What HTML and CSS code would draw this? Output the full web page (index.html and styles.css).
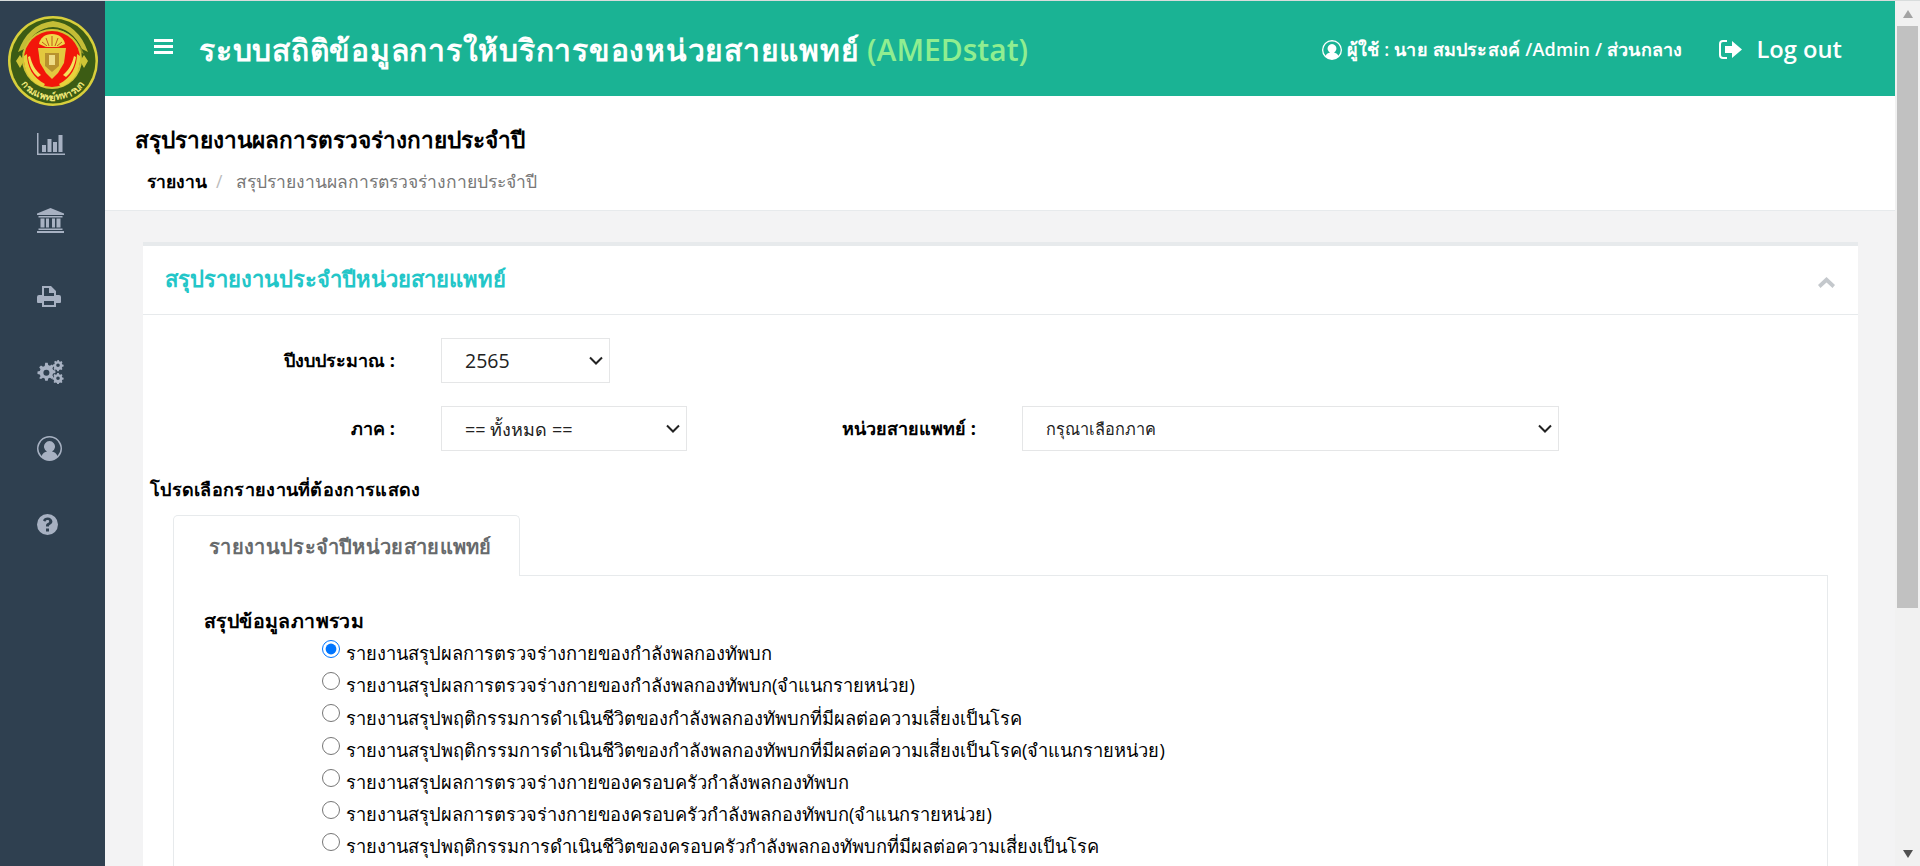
FILE: index.html
```html
<!DOCTYPE html>
<html>

	<head>
		<meta charset="UTF-8">
		<title>AMEDstat</title>
		<link rel="stylesheet" href="styles.css">
	</head>

	<body>
		<div class="wrap">
			<aside class="sidebar">
				<div class="logo">
					<svg width="90" height="90" viewBox="0 0 90 90">
						<defs>
							<path id="logoArc" d="M5.500 45a39.500 39.500 0 0 0 79 0"/>
						</defs>
						<circle cx="45" cy="45" r="45" fill="#d8cf3c"/>
						<circle cx="45" cy="45" r="42.500" fill="#3c5c14"/>
						<path d="M10 36Q20 8 45 5Q70 8 80 36L74 33Q64 12 45 11Q26 12 16 33Z" fill="#c4bd36"/>
						<path d="M14 38Q24 15 45 13Q66 15 76 38L72 36Q62 18 45 17Q28 18 18 36Z" fill="#8b9026"/>
						<circle cx="44" cy="43" r="30" fill="#cfc536"/>
						<circle cx="44" cy="43" r="28" fill="#f2160a"/>
						<path d="M44 18c-7 0-12 4-13 10l7 3h12l7-3c-1-6-6-10-13-10Z" fill="#efd94a"/>
						<path d="M44 20v10M38 22l3 8M50 22l-3 8M34 26l5 4M54 26l-5 4" stroke="#b53a12" stroke-width=".8" fill="none"/>
						<path d="M30 32h28l-2 15-6 10-6 6-6-6-6-10Z" fill="#e3c93f"/>
						<path d="M37 37h14v13l-7 6-7-6Z" fill="#b8922e"/>
						<path d="M41 39h6v10h-6Z" fill="#eedc86"/>
						<path d="M19 38c0 13 6 24 18 30l-2 3C22 66 15 54 16 40ZM69 38c0 13-6 24-18 30l2 3c13-5 20-17 19-31Z" fill="#e8d23c"/>
						<path d="M22 40c2 8 5 14 11 19l-3 2c-6-5-9-12-10-20ZM66 40c-2 8-5 14-11 19l3 2c6-5 9-12 10-20Z" fill="#f4e25a"/>
						<path d="M8 45l4-6 4 6-4 7ZM72 45l4-6 4 6-4 7Z" fill="#cfc536"/>
						<text class="logo-text"><textPath href="#logoArc" startOffset="50%" text-anchor="middle">กรมแพทย์ทหารบก</textPath></text>
					</svg>
				</div>
				<nav class="side-nav">
					<a href="#">
						<svg width="28" height="22" viewBox="0 0 28 22"><path d="M0 0h1.500v20.500H28V22H0Z"/><path d="M5 12h4v7H5ZM10.500 6h4v13h-4ZM16 9h4v10h-4ZM21.500 2h4v17h-4Z"/></svg>
					</a>
					<a href="#">
						<svg width="27" height="25" viewBox="0 0 27 25"><path d="M13.500 0 27 5.500V7H0V5.500ZM1.500 8h24v1.500h-24ZM3.500 10.500h4v9h-4ZM9 10.500h3v9H9ZM15 10.500h3v9h-3ZM19.500 10.500h4v9h-4ZM1.500 20.500h24V22h-24ZM0 23h27v2H0Z"/></svg>
					</a>
					<a href="#">
						<svg width="24" height="21" viewBox="0 0 24 21"><path fill-rule="evenodd" d="M5 0h9l5 5v4h3a2 2 0 0 1 2 2v5a1 1 0 0 1-1 1h-4v4H5v-4H1a1 1 0 0 1-1-1v-5a2 2 0 0 1 2-2h3ZM7 2v8h10V7h-5V2ZM7 15v4h10v-4Z"/></svg>
					</a>
					<a href="#">
						<svg width="27" height="24" viewBox="0 0 27 24"><path d="M8 3h2.500l.5 2.300 1.700.7 2-1.300 1.800 1.800-1.300 2 .7 1.700 2.300.5v2.600l-2.300.5-.7 1.700 1.300 2-1.800 1.800-2-1.300-1.700.7-.5 2.300H8l-.5-2.300-1.700-.7-2 1.300L2 18.500l1.300-2-.7-1.700-2.300-.5v-2.600l2.300-.5.7-1.700-1.300-2L3.800 5.700l2 1.300 1.700-.7Z" transform="translate(.2 -.2)"/><circle cx="9.400" cy="12.800" r="3" fill="#2f4050"/><path fill-rule="evenodd" d="M20.200 0h1.600l.3 1.300 1.200.5 1.100-.7 1.100 1.100-.7 1.100.5 1.200 1.300.3v1.600l-1.300.3-.5 1.200.7 1.100-1.100 1.100-1.100-.7-1.200.5-.3 1.300h-1.600l-.3-1.300-1.200-.5-1.100.7-1.100-1.100.7-1.100-.5-1.200L16 6.100V4.500l1.300-.3.5-1.200-.7-1.100 1.100-1.100 1.100.7 1.200-.5ZM21 3.500a1.800 1.800 0 1 0 0 3.600 1.800 1.800 0 0 0 0-3.600Z"/><path fill-rule="evenodd" d="M20.200 13h1.600l.3 1.300 1.200.5 1.100-.7 1.100 1.100-.7 1.100.5 1.200 1.300.3v1.600l-1.300.3-.5 1.200.7 1.100-1.100 1.100-1.100-.7-1.200.5-.3 1.200h-1.600l-.3-1.200-1.200-.5-1.100.7-1.100-1.100.7-1.100-.5-1.200-1.300-.3v-1.600l1.300-.3.5-1.200-.7-1.100 1.100-1.100 1.100.7 1.200-.5ZM21 16.500a1.800 1.800 0 1 0 0 3.600 1.800 1.800 0 0 0 0-3.600Z"/></svg>
					</a>
					<a href="#">
						<svg width="25" height="25" viewBox="0 0 25 25"><path fill-rule="evenodd" d="M12.500 0a12.500 12.500 0 1 1 0 25 12.500 12.500 0 0 1 0-25Zm0 1.600a10.900 10.900 0 0 0-8 18.300c1-2.600 3.500-4 5.500-4.400a5.500 5.500 0 1 1 5 0c2 .4 4.500 1.800 5.500 4.400a10.900 10.900 0 0 0-8-18.300Z"/></svg>
					</a>
					<a href="#">
						<svg width="21" height="21" viewBox="0 0 21 21"><path fill-rule="evenodd" d="M10.500 0a10.500 10.500 0 1 1 0 21 10.500 10.500 0 0 1 0-21ZM9 14.500v3h3v-3Zm1.700-11c-2.400 0-4 1.200-4.700 3l2.300 1.300c.4-1 1.100-1.700 2.200-1.700 1 0 1.700.5 1.700 1.300 0 .8-.7 1.200-1.500 1.700-1 .6-1.700 1.300-1.700 2.700v.7h3v-.5c0-.6.400-.9 1.100-1.300 1.200-.7 2.300-1.500 2.300-3.100 0-2.400-2.200-4.100-4.700-4.100Z"/></svg>
					</a>
				</nav>
			</aside>

			<div class="main">
				<header class="topbar">
					<div class="brand">
						<svg class="burger" width="19" height="15" viewBox="0 0 19 15"><path d="M0 0h19v3H0ZM0 6h19v3H0ZM0 12h19v3H0Z"/></svg>
						<span class="brand-name"><span class="brand-thai">ระบบสถิติข้อมูลการให้บริการของหน่วยสายแพทย์</span> <em>(AMEDstat)</em></span>
					</div>
					<div class="user">
						<svg width="20" height="20" viewBox="0 0 25 25"><path fill-rule="evenodd" d="M12.500 0a12.500 12.500 0 1 1 0 25 12.500 12.500 0 0 1 0-25Zm0 1.800a10.700 10.700 0 0 0-8 17.800c1-2.400 3.500-3.700 5.500-4.100a5.500 5.500 0 1 1 5 0c2 .4 4.500 1.700 5.500 4.100a10.700 10.700 0 0 0-8-17.800Z"/></svg>
						<span>ผู้ใช้ : นาย สมประสงค์ /Admin / ส่วนกลาง</span>
					</div>
					<a class="logout" href="#">
						<svg width="23" height="19" viewBox="0 0 23 19"><path d="M8 0v2H4a2 2 0 0 0-2 2v11a2 2 0 0 0 2 2h4v2H4a4 4 0 0 1-4-4V4a4 4 0 0 1 4-4Z"/><path d="M13 1l10 8.500L13 18v-5H6V6h7Z"/></svg>
						<span>Log out</span>
					</a>
				</header>

				<div class="page-head">
					<h2>สรุปรายงานผลการตรวจร่างกายประจำปี</h2>
					<ol class="breadcrumb">
						<li><a href="#">รายงาน</a></li>
						<li class="sep">/</li>
						<li class="current">สรุปรายงานผลการตรวจร่างกายประจำปี</li>
					</ol>
				</div>

				<div class="content">
					<section class="card">
						<div class="card-title">
							<h5>สรุปรายงานประจำปีหน่วยสายแพทย์</h5>
							<svg width="17" height="11" viewBox="0 0 17 11"><path d="M8.500 0 17 8l-2.500 3-6-5.500L2.500 11 0 8Z"/></svg>
						</div>
						<div class="card-body">
							<div class="form-row">
								<label class="form-label">ปีงบประมาณ :</label>
								<select class="field field-year"><option>2565</option></select>
							</div>
							<div class="form-row">
								<label class="form-label">ภาค :</label>
								<select class="field field-area"><option>== ทั้งหมด ==</option></select>
								<label class="form-label form-label-unit">หน่วยสายแพทย์ :</label>
								<select class="field field-unit"><option>กรุณาเลือกภาค</option></select>
							</div>
							<p class="choose">โปรดเลือกรายงานที่ต้องการแสดง</p>
							<div class="tabs">
								<div class="tab-bar">
									<a class="tab" href="#">รายงานประจำปีหน่วยสายแพทย์</a>
								</div>
								<div class="tab-panel">
									<h6>สรุปข้อมูลภาพรวม</h6>
									<div class="reports">
										<label><input type="radio" name="report" checked>รายงานสรุปผลการตรวจร่างกายของกำลังพลกองทัพบก</label>
										<label><input type="radio" name="report">รายงานสรุปผลการตรวจร่างกายของกำลังพลกองทัพบก(จำแนกรายหน่วย)</label>
										<label><input type="radio" name="report">รายงานสรุปพฤติกรรมการดำเนินชีวิตของกำลังพลกองทัพบกที่มีผลต่อความเสี่ยงเป็นโรค</label>
										<label><input type="radio" name="report">รายงานสรุปพฤติกรรมการดำเนินชีวิตของกำลังพลกองทัพบกที่มีผลต่อความเสี่ยงเป็นโรค(จำแนกรายหน่วย)</label>
										<label><input type="radio" name="report">รายงานสรุปผลการตรวจร่างกายของครอบครัวกำลังพลกองทัพบก</label>
										<label><input type="radio" name="report">รายงานสรุปผลการตรวจร่างกายของครอบครัวกำลังพลกองทัพบก(จำแนกรายหน่วย)</label>
										<label><input type="radio" name="report">รายงานสรุปพฤติกรรมการดำเนินชีวิตของครอบครัวกำลังพลกองทัพบกที่มีผลต่อความเสี่ยงเป็นโรค</label>
									</div>
								</div>
							</div>
						</div>
					</section>
				</div>
			</div>

			<div class="scrollbar">
				<span class="arrow-up"></span>
				<div class="thumb"></div>
				<span class="arrow-down"></span>
			</div>
		</div>
	</body>

</html>
```

FILE: styles.css
```css
* {
	box-sizing: border-box;
}

html,
body {
	height: 100%;
	margin: 0;
	overflow: hidden;
}

body {
	font: 17.500px/1.4 "Open Sans", "Noto Sans", sans-serif;
	color: #000;
	background: #f3f3f4;
}

a {
	color: inherit;
	text-decoration: none;
}

.wrap {
	display: flex;
	height: 100vh;
	border-top: 1px solid #d8dcdc;
	overflow: hidden;
}

.sidebar {
	flex: 0 0 105px;
	background: #2f4050;
}

.logo {
	height: 105px;
	padding: 15px 0 0 8px;
}

.logo-text {
	font-size: 9.500px;
	font-weight: 700;
	fill: #f0e878;
}

.side-nav {
	display: flex;
	flex-direction: column;
}

.side-nav a {
	display: flex;
	align-items: center;
	height: 76px;
	padding-left: 37px;
}

.side-nav svg {
	fill: #a7b1c2;
}

.main {
	flex: 1;
	min-width: 0;
	display: flex;
	flex-direction: column;
}

.topbar {
	flex: 0 0 95px;
	display: flex;
	align-items: center;
	padding: 3px 53px 0 49px;
	background: #1ab394;
	color: #fff;
}

.topbar svg {
	fill: #fff;
}

.brand {
	display: flex;
	align-items: center;
	gap: 26px;
	margin-right: auto;
}

.burger {
	margin-top: -7px;
}

.brand-name {
	font-size: 30px;
	font-weight: 700;
	line-height: 40px;
}

.brand-thai {
	letter-spacing: .75px;
}

.brand-name em {
	font-style: normal;
	font-weight: 600;
	color: #90ee90;
}

.user {
	display: flex;
	align-items: center;
	gap: 5px;
	font-size: 18px;
	font-weight: 600;
	letter-spacing: .2px;
}

.logout {
	display: flex;
	align-items: center;
	gap: 15px;
	margin-left: 36px;
	font-size: 23.700px;
	font-weight: 600;
}

.page-head {
	flex: 0 0 115px;
	padding: 28px 30px 0;
	background: #fff;
	border-bottom: 1px solid #e7eaec;
}

.page-head h2 {
	margin: 0;
	font-size: 22.600px;
	line-height: 32px;
	font-weight: 700;
}

.breadcrumb {
	display: flex;
	margin: 13px 0 0;
	padding: 0 0 0 12px;
	list-style: none;
	font-size: 17.500px;
	line-height: 24px;
}

.breadcrumb a {
	font-weight: 600;
}

.breadcrumb .sep {
	margin: 0 14px 0 9px;
	color: #bbb;
}

.breadcrumb .current {
	color: #777;
}

.content {
	flex: 1;
	padding: 31px 37px 0 38px;
	overflow: hidden;
}

.card {
	background: #fff;
	border-top: 4px solid #e7eaec;
	min-height: 100%;
}

.card-title {
	display: flex;
	align-items: center;
	justify-content: space-between;
	height: 69px;
	padding: 0 23px 3px 22px;
	border-bottom: 1px solid #e7eaec;
}

.card-title h5 {
	margin: 0;
	font-size: 22px;
	font-weight: 600;
	color: #23c6c8;
}

.card-title svg {
	fill: #c4c8cc;
	margin-top: 8px;
}

.card-body {
	padding: 23px 30px 0 0;
}

.form-row {
	display: flex;
	align-items: center;
	margin-bottom: 23px;
}

.form-label {
	width: 252px;
	font-size: 18px;
	font-weight: 700;
	text-align: right;
}

.form-label-unit {
	width: 289px;
}

.field {
	height: 45px;
	margin-left: 46px;
	padding: 0 0 0 23px;
	background: #fff url("data:image/svg+xml,%3Csvg xmlns='http://www.w3.org/2000/svg' width='14' height='9'%3E%3Cpath d='M1 1.500l6 6 6-6' fill='none' stroke='%23222' stroke-width='2'/%3E%3C/svg%3E") no-repeat right 6px center;
	border: 1px solid #e5e6e7;
	font: 18px "Open Sans", "Noto Sans", sans-serif;
	color: #222;
	appearance: none;
}

.field-year {
	width: 169px;
	font-size: 19.500px;
}

.field-area {
	width: 246px;
}

.field-unit {
	width: 537px;
	font-size: 16.300px;
}

.choose {
	margin: 26px 0 0 7px;
	font-size: 18px;
	line-height: 24px;
	font-weight: 700;
	letter-spacing: .3px;
}

.tabs {
	margin: 14px 0 0 30px;
}

.tab-bar {
	display: flex;
	height: 61px;
	border-bottom: 1px solid #e7eaec;
}

.tab {
	width: 347px;
	height: 61px;
	padding: 17px 0 0 8px;
	background: #fff;
	border: 1px solid #e7eaec;
	border-bottom: 0;
	border-radius: 5px 5px 0 0;
	font-size: 20px;
	font-weight: 700;
	letter-spacing: .3px;
	color: #676a6c;
	text-align: center;
}

.tab-panel {
	height: 400px;
	padding: 33px 30px 0;
	border: 1px solid #e7eaec;
	border-top: 0;
}

.tab-panel h6 {
	margin: 0;
	font-size: 19.500px;
	line-height: 24px;
	font-weight: 700;
	letter-spacing: .4px;
}

.reports {
	display: flex;
	flex-direction: column;
	padding-left: 118px;
	margin-top: 4px;
}

.reports label {
	display: flex;
	align-items: center;
	height: 32.200px;
	font-size: 18.300px;
}

.reports input {
	width: 18px;
	height: 18px;
	margin: -8px 6px 0 0;
}

.scrollbar {
	flex: 0 0 25px;
	display: flex;
	flex-direction: column;
	align-items: center;
	padding: 9px 2px 0;
	background: #f1f1f1;
}

.arrow-up {
	flex: none;
	margin-bottom: 8px;
	border: solid transparent;
	border-width: 0 5px 8px;
	border-bottom-color: #a3a3a3;
}

.thumb {
	flex: none;
	width: 21px;
	height: 582px;
	background: #c1c1c1;
}

.arrow-down {
	flex: none;
	margin-top: auto;
	margin-bottom: 8px;
	border: solid transparent;
	border-width: 8px 5px 0;
	border-top-color: #505050;
}
```
